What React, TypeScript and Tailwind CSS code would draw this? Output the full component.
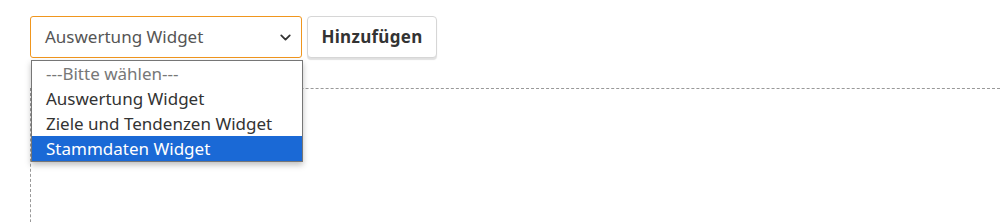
import { ChevronDown } from "lucide-react";

const options = ["---Bitte wählen---", "Auswertung Widget", "Ziele und Tendenzen Widget", "Stammdaten Widget"];

export default function App() {
  return (
    <div className="h-[222px] w-[1000px] overflow-hidden bg-white pl-[30px] pt-4 font-['Noto_Sans',sans-serif]">
      <div className="relative z-10 flex items-start gap-[5px]">
        <div className="relative">
          <div className="flex h-[42px] w-[272px] items-center justify-between rounded-[3px] border border-[#f0961e] bg-white pl-[14px] pr-[7px] text-[17px] text-[#555]">
            <span>Auswertung Widget</span>
            <ChevronDown size={17} strokeWidth={2.5} className="text-[#333]" />
          </div>
          <ul className="absolute left-px top-[44px] w-[272px] border border-[#767676] bg-white text-[17px] leading-[25px] shadow-[0_3px_6px_rgba(0,0,0,0.25)]">
            {options.map((o, i) => (
              <li
                key={o}
                className={
                  "h-[25px] pl-[14px] " +
                  (i === 0 ? "text-[#777]" : i === 3 ? "bg-[#1a69d6] text-white" : "text-[#333]")
                }
              >
                {o}
              </li>
            ))}
          </ul>
        </div>
        <button className="h-[42px] w-[130px] rounded-[4px] border border-[#d6d6d6] bg-white text-[17px] font-bold tracking-[0.3px] text-[#333] shadow-[0_2px_1px_rgba(0,0,0,0.12)]">
          Hinzufügen
        </button>
      </div>
      <div className="mt-[30px] h-[200px] border-l border-t border-dashed border-[#999]" />
    </div>
  );
}
